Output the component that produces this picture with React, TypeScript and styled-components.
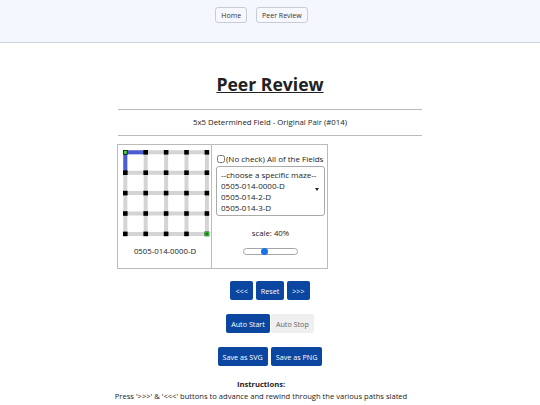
import React from 'react'
import styled, { createGlobalStyle } from 'styled-components'

const Global = createGlobalStyle`
  body {
    margin: 0;
    font-family: "Open Sans", "Noto Sans", sans-serif;
    color: #222;
    background: #fff;
  }
`

const Header = styled.header`
  height: 43px;
  background: #f4f7fe;
  border-bottom: 1px solid #cfd2dc;
  display: flex;
  justify-content: center;
  gap: 9px;
  padding: 7px 17px 0 0;
  box-sizing: border-box;
`

const NavButton = styled.button`
  font-family: inherit;
  font-size: 7px;
  color: #333;
  background: #f6f8fd;
  border: 1px solid #c8ccd6;
  border-radius: 3px;
  height: 16px;
  padding: 0 5px;
`

const Main = styled.main`
  width: 304px;
  margin: 0 auto;
  display: flex;
  flex-direction: column;
  align-items: stretch;
`

const Title = styled.h1`
  font-size: 17.6px;
  font-weight: 700;
  text-decoration: underline;
  text-align: center;
  margin: 28px 0 12px;
  line-height: 26px;
`

const Rule = styled.hr`
  width: 100%;
  margin: 0;
  border: 0;
  border-top: 1px solid #bbb;
`

const Subtitle = styled.div`
  font-size: 7.8px;
  text-align: center;
  padding: 8px 0;
  line-height: 9px;
`

const Table = styled.div`
  margin-top: 8px;
  margin-left: -1px;
  display: grid;
  grid-template-columns: 94px 117px;
  width: 211px;
  height: 125px;
  border: 1px solid #bbb;
  box-sizing: border-box;
`

const MazeCell = styled.div`
  border-right: 1px solid #bbb;
  display: flex;
  flex-direction: column;
  align-items: flex-start;
  padding: 3px 0 0 3px;
`

const MazeLabel = styled.div`
  width: 88px;
  text-align: center;
  font-size: 7.8px;
  margin-top: 8px;
`

const Controls = styled.div`
  display: flex;
  flex-direction: column;
  align-items: center;
  padding: 9px 3px 0 3px;
`

const CheckRow = styled.label`
  align-self: flex-start;
  display: flex;
  align-items: center;
  font-size: 8px;
  line-height: 10px;
  margin-left: 2px;

  input {
    margin: 0 1px 0 0;
    width: 8px;
    height: 8px;
  }
`

const ListBox = styled.div`
  position: relative;
  margin-top: 2px;
  width: 109px;
  height: 50px;
  border: 1px solid #aaa;
  border-radius: 3px;
  box-sizing: border-box;
  overflow: hidden;
  padding: 2px 4px;
  font-size: 8px;
  line-height: 11px;

  &::after {
    content: '';
    position: absolute;
    right: 5px;
    top: 21px;
    border-left: 2px solid transparent;
    border-right: 2px solid transparent;
    border-top: 3px solid #222;
  }
`

const Scale = styled.div`
  font-size: 7.8px;
  margin-top: 12px;
`

const Slider = styled.div`
  position: relative;
  margin-top: 10px;
  width: 55px;
  height: 7px;
  border: 1px solid #a5a5a5;
  border-radius: 4px;
  box-sizing: border-box;

  &::after {
    content: '';
    position: absolute;
    left: 17px;
    top: -1px;
    width: 7px;
    height: 7px;
    border-radius: 50%;
    background: #1a73e8;
  }
`

const ButtonRow = styled.div<{ $top: number; $gap: number }>`
  display: flex;
  justify-content: center;
  gap: ${p => p.$gap}px;
  margin-top: ${p => p.$top}px;
`

const ActionButton = styled.button<{ $off?: boolean }>`
  font-family: inherit;
  font-size: 7.2px;
  height: 19px;
  padding: 0 5px;
  border: 0;
  border-radius: 2px;
  background: ${p => (p.$off ? '#efefef' : '#0b47a1')};
  color: ${p => (p.$off ? '#666' : '#fff')};
`

const Instructions = styled.div`
  margin: 12px 0 0 -7px;
  width: 300px;
  text-align: center;
  font-size: 7.6px;
  line-height: 12px;

  strong {
    display: block;
  }
`

const pts = [0, 1, 2, 3, 4].map(i => 4.3 + 20.4 * i)

function Maze() {
  const end = pts[4]
  return (
    <svg width="90" height="90" viewBox="0 0 90 90">
      {pts.map(p => (
        <g key={p}>
          <line x1={pts[0]} y1={p} x2={pts[4]} y2={p} stroke="#d4d4d4" strokeWidth="4" />
          <line x1={p} y1={pts[0]} x2={p} y2={pts[4]} stroke="#d4d4d4" strokeWidth="4" />
        </g>
      ))}
      <line x1={pts[0]} y1={pts[0]} x2={pts[1]} y2={pts[0]} stroke="#4a5bd6" strokeWidth="4" />
      <line x1={pts[0]} y1={pts[0]} x2={pts[0]} y2={pts[1]} stroke="#4a5bd6" strokeWidth="4" />
      {pts.map(y =>
        pts.map(x => <rect key={`${x}-${y}`} x={x - 2.3} y={y - 2.3} width="4.6" height="4.6" fill="#000" />)
      )}
      <rect x={pts[0] - 1.6} y={pts[0] - 1.6} width="3.2" height="3.2" fill="#3dd63d" />
      <rect x={end - 2.3} y={end - 2.3} width="4.6" height="4.6" fill="#2fbf2f" />
      <path d={`M${end - 1.5} ${end}h3M${end} ${end - 1.5}v3`} stroke="#0a6a0a" strokeWidth="1" />
    </svg>
  )
}

export default function App() {
  return (
    <>
      <Global />
      <Header>
        <NavButton>Home</NavButton>
        <NavButton>Peer Review</NavButton>
      </Header>
      <Main>
        <Title>Peer Review</Title>
        <Rule />
        <Subtitle>5x5 Determined Field - Original Pair (#014)</Subtitle>
        <Rule />
        <Table>
          <MazeCell>
            <Maze />
            <MazeLabel>0505-014-0000-D</MazeLabel>
          </MazeCell>
          <Controls>
            <CheckRow>
              <input type="checkbox" />
              (No check) All of the Fields
            </CheckRow>
            <ListBox>
              <div>--choose a specific maze--</div>
              <div>0505-014-0000-D</div>
              <div>0505-014-2-D</div>
              <div>0505-014-3-D</div>
              <div>0505-014-4-D</div>
            </ListBox>
            <Scale>scale: 40%</Scale>
            <Slider />
          </Controls>
        </Table>
        <ButtonRow $top={12} $gap={3}>
          <ActionButton>&lt;&lt;&lt;</ActionButton>
          <ActionButton>Reset</ActionButton>
          <ActionButton>&gt;&gt;&gt;</ActionButton>
        </ButtonRow>
        <ButtonRow $top={14} $gap={1}>
          <ActionButton>Auto Start</ActionButton>
          <ActionButton $off>Auto Stop</ActionButton>
        </ButtonRow>
        <ButtonRow $top={14} $gap={3}>
          <ActionButton>Save as SVG</ActionButton>
          <ActionButton>Save as PNG</ActionButton>
        </ButtonRow>
        <Instructions>
          <strong>Instructions:</strong>
          Press '&gt;&gt;&gt;' &amp; '&lt;&lt;&lt;' buttons to advance and rewind through the various paths slated to be displayed.
        </Instructions>
      </Main>
    </>
  )
}
